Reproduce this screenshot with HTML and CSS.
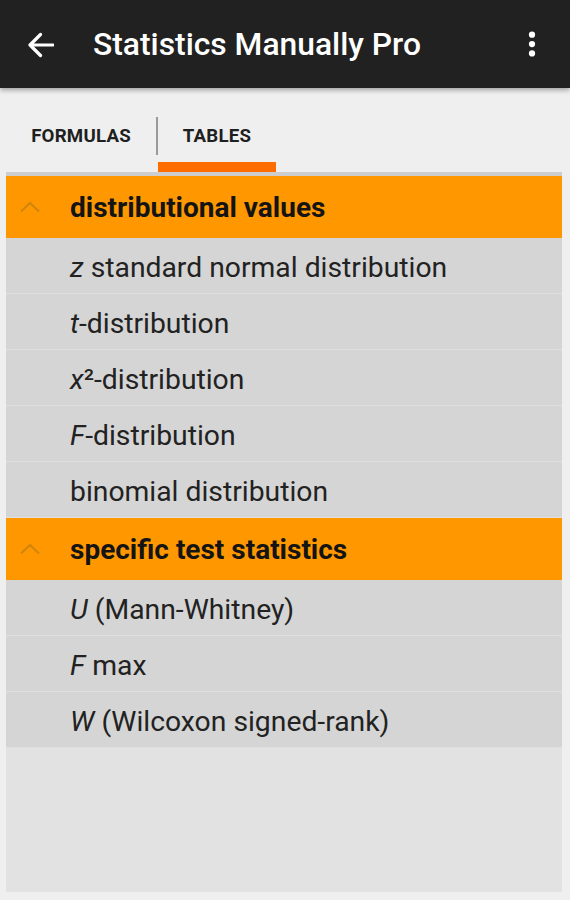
FILE: index.html
```html
<!DOCTYPE html>
<html>
<head>
<meta charset="utf-8">
<link rel="stylesheet" href="styles.css">
</head>
<body>
<header class="appbar">
  <svg class="icon back" width="28" height="28" viewBox="0 0 28 28"><path d="M27 14H4M14.5 3.5L4 14l10.5 10.5" fill="none" stroke="#fff" stroke-width="3.2" stroke-linecap="round" stroke-linejoin="round"/></svg>
  <h1 class="title">Statistics Manually Pro</h1>
  <svg class="icon more" width="30" height="30" viewBox="0 0 24 24"><circle cx="12" cy="4.5" r="2.5" fill="#fff"/><circle cx="12" cy="12" r="2.5" fill="#fff"/><circle cx="12" cy="19.5" r="2.5" fill="#fff"/></svg>
</header>
<nav class="tabs">
  <div class="tab">FORMULAS</div>
  <div class="divider"></div>
  <div class="tab active">TABLES</div>
</nav>
<main class="panel">
  <div class="group">
    <svg class="chev" width="24" height="24" viewBox="0 0 24 24"><path d="M3 16.5L12 8l9 8.5" fill="none" stroke="#cf850f" stroke-width="2"/></svg>
    <span>distributional values</span>
  </div>
  <div class="item"><i>z</i>&nbsp;standard normal distribution</div>
  <div class="item"><i>t</i>-distribution</div>
  <div class="item"><i>x</i>²-distribution</div>
  <div class="item"><i>F</i>-distribution</div>
  <div class="item">binomial distribution</div>
  <div class="group">
    <svg class="chev" width="24" height="24" viewBox="0 0 24 24"><path d="M3 16.5L12 8l9 8.5" fill="none" stroke="#cf850f" stroke-width="2"/></svg>
    <span>specific test statistics</span>
  </div>
  <div class="item"><i>U</i>&nbsp;(Mann-Whitney)</div>
  <div class="item"><i>F</i>&nbsp;max</div>
  <div class="item"><i>W</i>&nbsp;(Wilcoxon signed-rank)</div>
</main>
</body>
</html>
```
FILE: styles.css
```css
* { box-sizing: border-box; }
html, body { margin: 0; padding: 0; }
body {
  width: 570px;
  height: 900px;
  background: #efefef;
  font-family: Roboto, "Noto Sans", sans-serif;
  overflow: hidden;
}
.appbar {
  height: 88px;
  background: #212121;
  display: flex;
  align-items: center;
  padding: 0 24px 0 26px;
  box-shadow: 0 2px 5px rgba(0,0,0,0.35);
  position: relative;
  z-index: 2;
}
.icon { flex: none; }
.back { margin-top: 2px; }
.title {
  margin: 0 0 0 39px;
  color: #fff;
  font-size: 31.8px;
  font-weight: 500;
  flex: 1;
}
.more { margin-right: -1px; }
.tabs {
  height: 84px;
  display: flex;
  align-items: stretch;
  padding-left: 6px;
}
.tab {
  font-size: 18.7px;
  font-weight: 700;
  color: #1f1f1f;
  display: flex;
  align-items: center;
  justify-content: center;
  padding-top: 12px;
  letter-spacing: 0.2px;
}
.tab:first-child { width: 150px; }
.divider {
  width: 2px;
  background: #9a9a9a;
  margin: 29px 0 17px;
}
.tab.active {
  width: 118px;
  border-bottom: 10px solid #ff6d00;
  padding-top: 22px;
}
.panel {
  margin: 0 8px 0 6px;
  height: 720px;
  background: #e2e2e2;
  border-top: 4px solid #cdcdcd;
}
.group {
  height: 62px;
  background: #ff9800;
  display: flex;
  align-items: center;
  padding-left: 12px;
  font-size: 28px;
  font-weight: 700;
  color: #141414;
}
.group .chev { margin-right: 28px; }
.item {
  height: 56px;
  background: #d5d5d5;
  border-bottom: 1px solid #e0e0e0;
  display: flex;
  align-items: center;
  padding-left: 64px;
  padding-top: 3px;
  font-size: 28.3px;
  color: #222;
}
.item i { font-style: italic; }
```
